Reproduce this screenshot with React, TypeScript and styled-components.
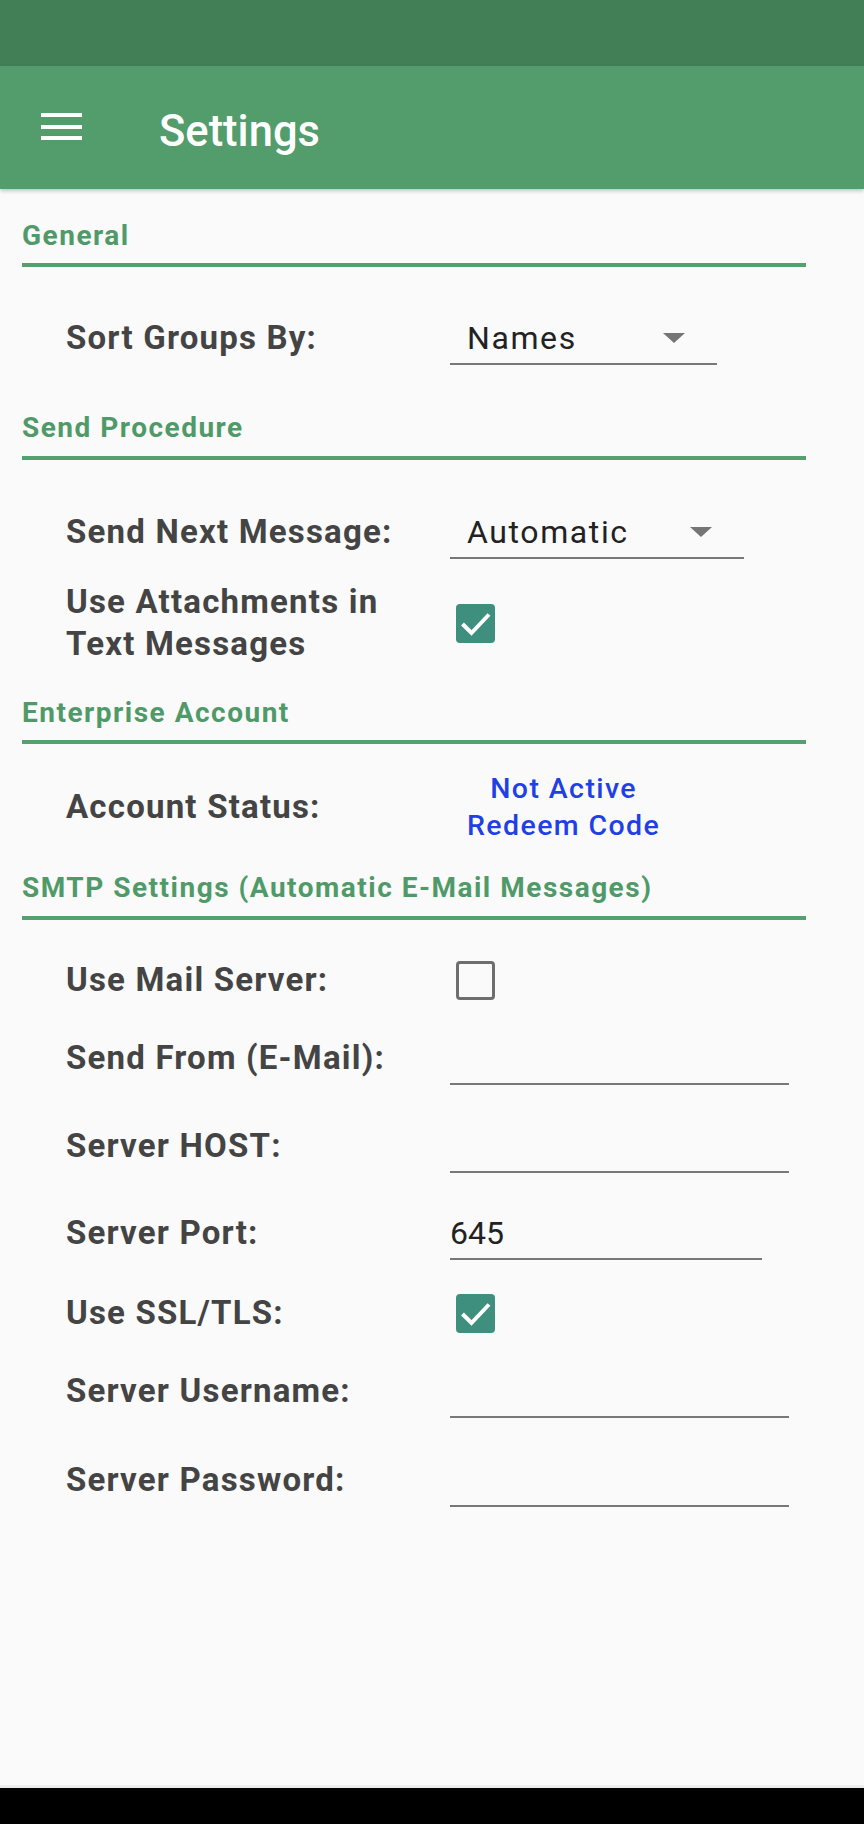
import styled, { createGlobalStyle } from 'styled-components'

const GlobalStyle = createGlobalStyle`
  html, body {
    margin: 0;
    padding: 0;
    background: #fafafa;
  }

  body {
    font-family: Roboto, 'Noto Sans', 'Liberation Sans', sans-serif;
  }
`

const Screen = styled.div`
  display: flex;
  flex-direction: column;
  width: 864px;
  height: 1824px;
  background: #fafafa;
  overflow: hidden;
`

const StatusBar = styled.div`
  height: 66px;
  background: #427f56;
  flex-shrink: 0;
`

const AppBar = styled.header`
  display: flex;
  align-items: flex-start;
  height: 123px;
  padding-left: 41px;
  background: #539c6b;
  box-shadow: 0 2px 4px rgba(0, 0, 0, 0.22);
  flex-shrink: 0;
  position: relative;
  z-index: 1;

  h1 {
    margin: 39px 0 0 77px;
    font-size: 43.5px;
    line-height: 54px;
    font-weight: 500;
    color: #ffffff;
  }
`

const MenuButton = styled.div`
  display: flex;
  flex-direction: column;
  gap: 7.5px;
  width: 41px;
  margin-top: 47px;

  span {
    display: block;
    height: 4px;
    background: #ffffff;
  }
`

const Content = styled.main`
  flex: 1;
`

const SectionTitle = styled.h2<{ $top: number }>`
  margin: ${(p) => p.$top}px 0 0;
  padding-left: 22px;
  font-size: 28px;
  line-height: 32px;
  font-weight: 700;
  letter-spacing: 1.5px;
  color: #4f9a68;
`

const SectionRule = styled.div<{ $top?: number }>`
  height: 4px;
  margin: ${(p) => p.$top ?? 12}px 58px 0 22px;
  background: #55a06f;
`

const Row = styled.div<{ $top: number; $center?: boolean }>`
  display: flex;
  align-items: ${(p) => (p.$center ? 'center' : 'flex-start')};
  margin-top: ${(p) => p.$top}px;
  padding-left: 66px;
`

const Label = styled.div`
  width: 384px;
  flex-shrink: 0;
  font-size: 33px;
  line-height: 40px;
  font-weight: 700;
  letter-spacing: 1.2px;
  color: #444444;
`

const TwoLineLabel = styled(Label)`
  line-height: 42px;
`

const Dropdown = styled.div<{ $width: number }>`
  display: flex;
  align-items: flex-start;
  justify-content: space-between;
  width: ${(p) => p.$width}px;
  padding: 0 32px 5px 17px;
  box-sizing: border-box;
  border-bottom: 2px solid #787878;
  font-size: 32px;
  line-height: 40px;
  letter-spacing: 1.6px;
  color: #222222;
`

const Caret = styled.span`
  width: 0;
  height: 0;
  margin-top: 15px;
  border-left: 11px solid transparent;
  border-right: 11px solid transparent;
  border-top: 10px solid #757575;
`

const TextField = styled.div<{ $width: number }>`
  width: ${(p) => p.$width}px;
  height: 40px;
  padding-bottom: 5px;
  border-bottom: 2px solid #787878;
  font-size: 32px;
  line-height: 40px;
  color: #222222;
`

const CheckBox = styled.div<{ $checked?: boolean }>`
  display: flex;
  align-items: center;
  justify-content: center;
  width: 39px;
  height: 39px;
  margin-left: 6px;
  box-sizing: border-box;
  border-radius: 4px;
  background: ${(p) => (p.$checked ? '#3f8f7f' : 'transparent')};
  border: ${(p) => (p.$checked ? 'none' : '3.5px solid #6e6e6e')};
`

const StatusLinks = styled.div`
  padding-left: 17px;
  text-align: center;
  font-size: 28.5px;
  line-height: 37px;
  font-weight: 500;
  letter-spacing: 1.4px;
  color: #1f40e6;
`

const NavBar = styled.div`
  height: 36px;
  background: #000000;
  border-top: 3px solid #ececec;
  flex-shrink: 0;
`

const Check = ({ checked }: { checked?: boolean }) => (
  <CheckBox $checked={checked}>
    {checked && (
      <svg width='39' height='39' viewBox='0 0 39 39'>
        <polyline
          points='6.5,20 15.5,29 33,10.5'
          fill='none'
          stroke='#ffffff'
          strokeWidth='4'
        />
      </svg>
    )}
  </CheckBox>
)

const App = () => {
  return (
    <Screen>
      <GlobalStyle />
      <StatusBar />
      <AppBar>
        <MenuButton>
          <span />
          <span />
          <span />
        </MenuButton>
        <h1>Settings</h1>
      </AppBar>

      <Content>
        <SectionTitle $top={31}>General</SectionTitle>
        <SectionRule $top={11} />
        <Row $top={51}>
          <Label>Sort Groups By:</Label>
          <Dropdown $width={267}>
            Names
            <Caret />
          </Dropdown>
        </Row>

        <SectionTitle $top={47}>Send Procedure</SectionTitle>
        <SectionRule />
        <Row $top={52}>
          <Label>Send Next Message:</Label>
          <Dropdown $width={294}>
            Automatic
            <Caret />
          </Dropdown>
        </Row>
        <Row $top={22} $center>
          <TwoLineLabel>
            Use Attachments in
            <br />
            Text Messages
          </TwoLineLabel>
          <Check checked />
        </Row>

        <SectionTitle $top={32}>Enterprise Account</SectionTitle>
        <SectionRule $top={11} />
        <Row $top={26} $center>
          <Label>Account Status:</Label>
          <StatusLinks>
            Not Active
            <br />
            Redeem Code
          </StatusLinks>
        </Row>

        <SectionTitle $top={28}>SMTP Settings (Automatic E-Mail Messages)</SectionTitle>
        <SectionRule />
        <Row $top={40} $center>
          <Label>Use Mail Server:</Label>
          <Check />
        </Row>
        <Row $top={38}>
          <Label>Send From (E-Mail):</Label>
          <TextField $width={339} />
        </Row>
        <Row $top={41}>
          <Label>Server HOST:</Label>
          <TextField $width={339} />
        </Row>
        <Row $top={40}>
          <Label>Server Port:</Label>
          <TextField $width={312}>645</TextField>
        </Row>
        <Row $top={33} $center>
          <Label>Use SSL/TLS:</Label>
          <Check checked />
        </Row>
        <Row $top={38}>
          <Label>Server Username:</Label>
          <TextField $width={339} />
        </Row>
        <Row $top={42}>
          <Label>Server Password:</Label>
          <TextField $width={339} />
        </Row>
      </Content>

      <NavBar />
    </Screen>
  )
}

export default App
